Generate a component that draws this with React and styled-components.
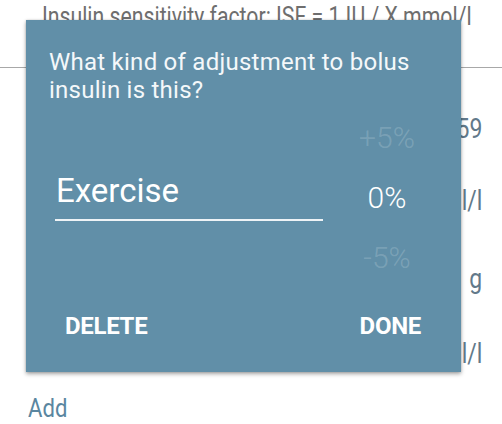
import styled, { createGlobalStyle } from "styled-components";

const GlobalStyle = createGlobalStyle`
    html, body {
        margin: 0;
        padding: 0;
        background: #FFFFFF;
    }
    body {
        font-family: Roboto, "Noto Sans", sans-serif;
    }
`;

const rows = [
    { value: "59", height: 72 },
    { value: "l/l", height: 78 },
    { value: "g", height: 75 },
    { value: "l/l", height: 75 },
];

function App() {
    return (
        <Page>
            <GlobalStyle />
            <List>
                <TopRow>
                    <Narrow>Insulin sensitivity factor: ISF = 1 IU / X mmol/l</Narrow>
                </TopRow>
                <Values>
                    {rows.map((row, i) => (
                        <ValueRow key={i} $height={row.height}>
                            <Narrow>{row.value}</Narrow>
                        </ValueRow>
                    ))}
                </Values>
                <AddLink>
                    <Narrow>Add</Narrow>
                </AddLink>
            </List>

            <Dialog>
                <Title>What kind of adjustment to bolus insulin is this?</Title>
                <Body>
                    <NameField>
                        <NameText>Exercise</NameText>
                    </NameField>
                    <Picker>
                        <PickerItem $faded>+5%</PickerItem>
                        <PickerItem>0%</PickerItem>
                        <PickerItem $faded>-5%</PickerItem>
                    </Picker>
                </Body>
                <Actions>
                    <ActionButton>DELETE</ActionButton>
                    <ActionButton>DONE</ActionButton>
                </Actions>
            </Dialog>
        </Page>
    );
}

export default App;

const Page = styled.div`
    position: relative;
    width: 502px;
    height: 424px;
    overflow: hidden;
    background: #FFFFFF;
`;

const List = styled.div`
    display: flex;
    flex-direction: column;
    color: #62798a;
`;

const Narrow = styled.span`
    display: inline-block;
    transform: scaleX(0.85);
`;

const TopRow = styled.div`
    height: 66px;
    box-sizing: border-box;
    border-bottom: 1px solid #a8a8a8;
    padding-left: 42px;
    margin-top: 2px;
    font-size: 25px;
    line-height: 30px;
    color: #6e6e6e;
    white-space: nowrap;
    span {
        transform-origin: left center;
    }
`;

const Values = styled.div`
    display: flex;
    flex-direction: column;
    padding: 45px 20px 0 0;
`;

const ValueRow = styled.div`
    height: ${p => p.$height}px;
    display: flex;
    justify-content: flex-end;
    font-size: 27px;
    line-height: 32px;
    span {
        transform-origin: right center;
    }
`;

const AddLink = styled.div`
    padding-left: 28px;
    margin-top: -21px;
    font-size: 26px;
    line-height: 32px;
    color: #5a86a0;
    span {
        transform-origin: left center;
    }
`;

const Dialog = styled.div`
    position: absolute;
    left: 26px;
    top: 20px;
    width: 435px;
    height: 352px;
    box-sizing: border-box;
    background: #618fa8;
    box-shadow: 0 2px 4px rgba(0, 0, 0, 0.35), 0 0 2px rgba(0, 0, 0, 0.15);
    display: flex;
    flex-direction: column;
    padding: 28px 0 0 0;
    color: #FFFFFF;
`;

const Title = styled.div`
    padding: 0 30px 0 23px;
    font-size: 24px;
    line-height: 28px;
    letter-spacing: 0.25px;
    color: #f4f8fa;
`;

const Body = styled.div`
    display: flex;
    align-items: flex-start;
    margin-top: 3px;
    height: 180px;
`;

const NameField = styled.div`
    margin: 66px 0 0 29px;
    width: 268px;
    border-bottom: 2px solid #eef3f6;
    padding-bottom: 10px;
`;

const NameText = styled.div`
    font-size: 33px;
    line-height: 36px;
    padding-left: 1px;
`;

const Picker = styled.div`
    margin-left: 31px;
    width: 66px;
    display: flex;
    flex-direction: column;
    align-items: center;
`;

const PickerItem = styled.div`
    height: 60px;
    display: flex;
    align-items: center;
    font-size: 30px;
    font-weight: 300;
    color: ${p => (p.$faded ? "rgba(255, 255, 255, 0.18)" : "#FFFFFF")};
`;

const Actions = styled.div`
    display: flex;
    justify-content: space-between;
    padding: 24px 40px 0 39px;
`;

const ActionButton = styled.div`
    font-size: 24px;
    font-weight: 700;
    line-height: 30px;
    letter-spacing: -0.3px;
    color: #FFFFFF;
`;
